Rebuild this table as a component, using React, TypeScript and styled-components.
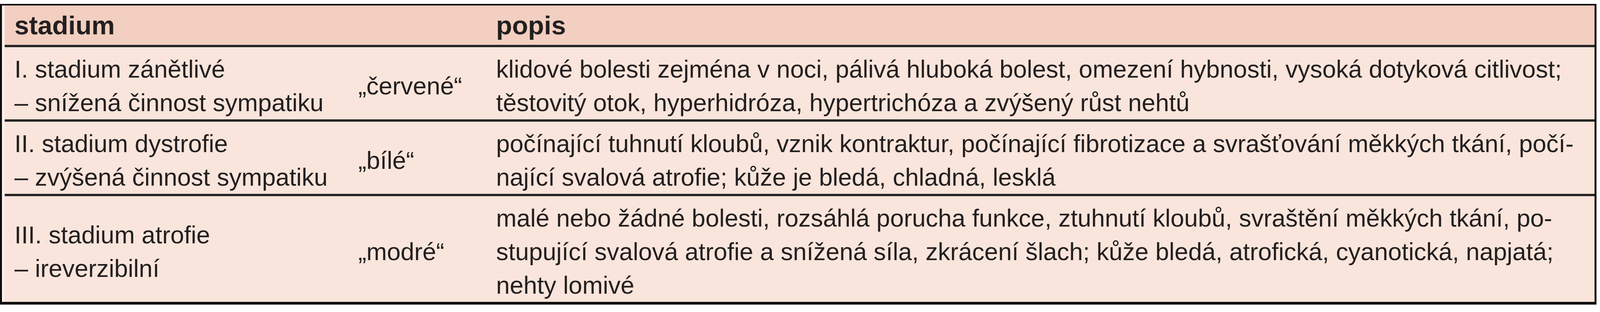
import React from "react";
import styled, { createGlobalStyle } from "styled-components";

const GlobalStyle = createGlobalStyle`
  html, body {
    margin: 0;
    padding: 0;
    background: #ffffff;
  }
  body {
    font-family: "Liberation Sans", Arial, sans-serif;
    color: #231f20;
  }
`;

const Page = styled.div`
  padding: 10px 9px 0 0;
  background: #ffffff;
`;

const Table = styled.div`
  box-sizing: border-box;
  border-top: 4px solid #0f0f0f;
  border-left: 5px solid #0f0f0f;
  border-right: 5px solid #0f0f0f;
  border-bottom: 7px solid #0f0f0f;
  background: #f9e5db;
`;

const Inner = styled.div`
  border-left: 7px solid #fcefe9;
`;

const Row = styled.div<{ $head?: boolean; $divider?: boolean }>`
  display: grid;
  grid-template-columns: 905px 353px minmax(0, 1fr);
  background: ${(p) => (p.$head ? "#f2cfc0" : "#f9e5db")};
  border-top: ${(p) => (p.$divider ? "6px solid #262626" : "none")};
  padding: ${(p) => (p.$head ? "2px 0 1px 0" : "13px 0 0 0")};
`;

const HeadCell = styled.div<{ $span?: number }>`
  grid-column: span ${(p) => p.$span ?? 1};
  font-weight: 700;
  font-size: 67px;
  line-height: 98px;
  padding-left: ${(p) => (p.$span === 2 ? "25px" : "0")};
  white-space: nowrap;
`;

const StageCell = styled.div`
  align-self: center;
  padding-left: 25px;
  font-size: 63px;
  line-height: 86px;
  white-space: nowrap;
`;

const ColorCell = styled.div`
  align-self: center;
  font-size: 63px;
  line-height: 86px;
  white-space: nowrap;
`;

const DescCell = styled.div`
  font-size: 63px;
  line-height: 86px;
  white-space: nowrap;
`;

const Line = styled.span`
  display: block;
`;

type Stage = {
  stage: string[];
  color: string;
  desc: string[];
};

const stages: Stage[] = [
  {
    stage: ["I. stadium zánětlivé", "– snížená činnost sympatiku"],
    color: "„červené“",
    desc: [
      "klidové bolesti zejména v noci, pálivá hluboká bolest, omezení hybnosti, vysoká dotyková citlivost;",
      "těstovitý otok, hyperhidróza, hypertrichóza a zvýšený růst nehtů",
    ],
  },
  {
    stage: ["II. stadium dystrofie", "– zvýšená činnost sympatiku"],
    color: "„bílé“",
    desc: [
      "počínající tuhnutí kloubů, vznik kontraktur, počínající fibrotizace a svrašťování měkkých tkání, počí-",
      "nající svalová atrofie; kůže je bledá, chladná, lesklá",
    ],
  },
  {
    stage: ["III. stadium atrofie", "– ireverzibilní"],
    color: "„modré“",
    desc: [
      "malé nebo žádné bolesti, rozsáhlá porucha funkce, ztuhnutí kloubů, svraštění měkkých tkání, po-",
      "stupující svalová atrofie a snížená síla, zkrácení šlach; kůže bledá, atrofická, cyanotická, napjatá;",
      "nehty lomivé",
    ],
  },
];

export default function App() {
  return (
    <>
      <GlobalStyle />
      <Page>
        <Table>
          <Inner>
            <Row $head>
              <HeadCell $span={2}>stadium</HeadCell>
              <HeadCell>popis</HeadCell>
            </Row>
            {stages.map((s) => (
              <Row key={s.color} $divider>
                <StageCell>
                  {s.stage.map((l) => (
                    <Line key={l}>{l}</Line>
                  ))}
                </StageCell>
                <ColorCell>{s.color}</ColorCell>
                <DescCell>
                  {s.desc.map((l) => (
                    <Line key={l}>{l}</Line>
                  ))}
                </DescCell>
              </Row>
            ))}
          </Inner>
        </Table>
      </Page>
    </>
  );
}
